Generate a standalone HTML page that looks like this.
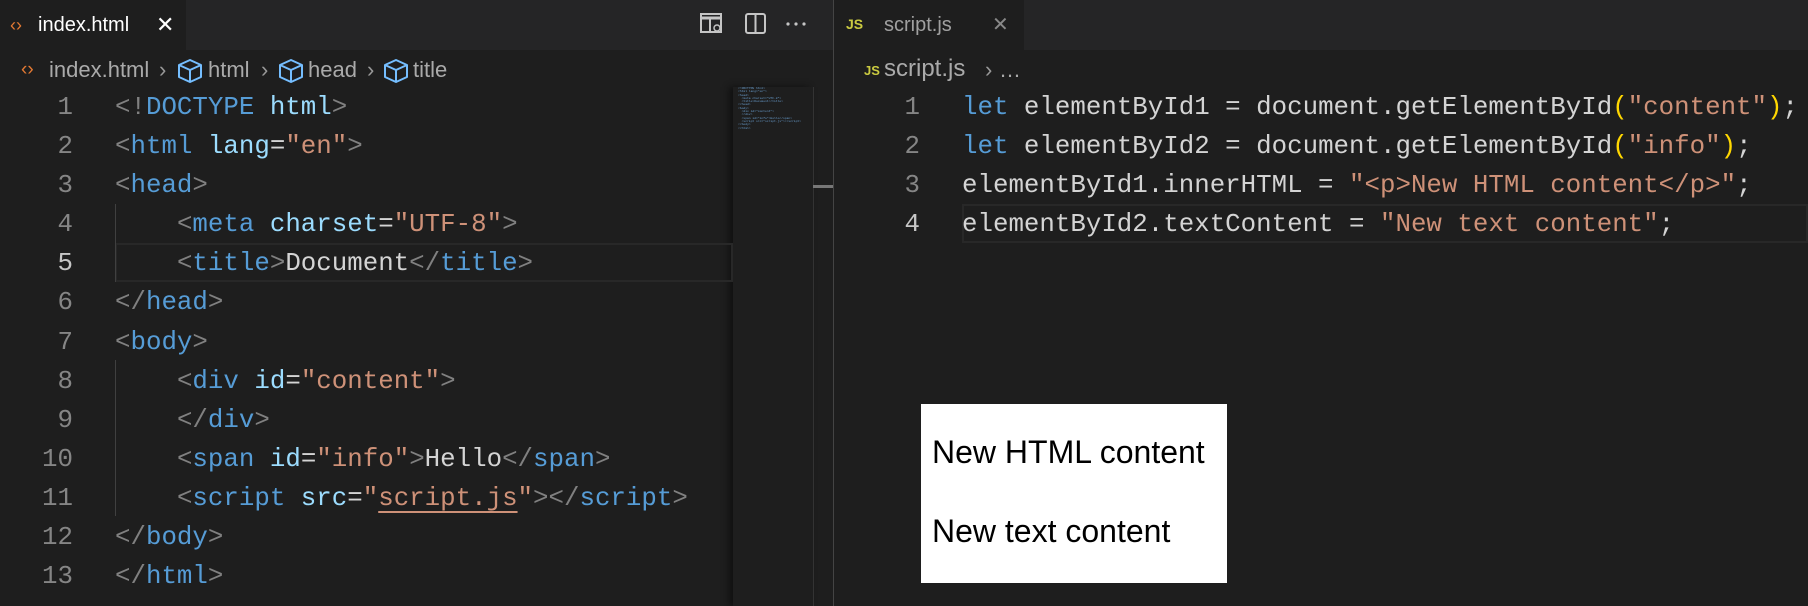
<!DOCTYPE html>
<html><head><style>
*{margin:0;padding:0;box-sizing:border-box}
body{width:1808px;height:606px;background:#1e1e1e;position:relative;overflow:hidden;font-family:"Liberation Sans",sans-serif}
.abs{position:absolute}
.tabbar{top:0;height:50px;background:#252526}
.tab{top:0;height:50px;background:#1e1e1e;color:#fff;font-size:20px;line-height:50px}
.code{font-family:"Liberation Mono",monospace;font-size:25.8px;color:#d4d4d4;white-space:pre}
.ln{font-family:"Liberation Mono",monospace;font-size:25.8px;color:#858585;text-align:right;width:40px;white-space:pre}
.t{color:#569cd6}.p{color:#808080}.a{color:#9cdcfe}.s{color:#ce9178}.y{color:#ffd700}
.cr{position:absolute;top:56px;line-height:28px;font-size:22px;color:#aaaaaa;white-space:nowrap}
</style></head><body>
<div class="abs tabbar" style="left:0;width:833px"></div>
<div class="abs tabbar" style="left:834px;width:974px"></div>
<div class="abs" style="left:833px;top:0;width:1px;height:606px;background:#444"></div>
<div class="abs tab" style="left:0;width:186px;padding-left:38px">index.html</div>
<div class="abs" style="left:156px;top:0;line-height:50px;color:#fff;font-size:22px">✕</div>
<div class="abs" style="left:10px;top:13px;color:#e37933;font-size:18px;line-height:24px">‹›</div>
<div class="abs tab" style="left:834px;width:190px;color:#a0a0a0;padding-left:50px">script.js</div>
<div class="abs" style="left:992px;top:0;line-height:50px;color:#888;font-size:20px">✕</div>
<div class="abs" style="left:846px;top:16px;color:#cbcb41;font-size:14px;font-weight:bold">JS</div>
<svg class="abs" style="left:700px;top:13px" width="110" height="22"><rect x="1" y="1" width="20" height="18" fill="none" stroke="#c5c5c5" stroke-width="2"/><line x1="1" y1="5" x2="21" y2="5" stroke="#c5c5c5" stroke-width="3"/><line x1="10" y1="5" x2="10" y2="19" stroke="#c5c5c5" stroke-width="2"/><circle cx="17" cy="15" r="3" fill="#252526" stroke="#c5c5c5" stroke-width="1.5"/><rect x="46" y="1" width="19" height="19" rx="2" fill="none" stroke="#c5c5c5" stroke-width="2"/><line x1="55.5" y1="1" x2="55.5" y2="20" stroke="#c5c5c5" stroke-width="2"/><circle cx="88" cy="11" r="1.6" fill="#c5c5c5"/><circle cx="96" cy="11" r="1.6" fill="#c5c5c5"/><circle cx="104" cy="11" r="1.6" fill="#c5c5c5"/></svg>
<!-- breadcrumbs -->
<div class="cr" style="left:21px;color:#e37933;font-size:19px">‹›</div>
<div class="cr" style="left:49px">index.html</div>
<div class="cr" style="left:159px;color:#999">›</div>
<div class="cr" style="left:208px">html</div>
<div class="cr" style="left:261px;color:#999">›</div>
<div class="cr" style="left:308px">head</div>
<div class="cr" style="left:367px;color:#999">›</div>
<div class="cr" style="left:413px">title</div>
<svg class="abs" style="left:0;top:58px" width="420" height="26">
<g fill="none" stroke="#75beff" stroke-width="2" stroke-linejoin="round">
<path d="M190 2 L201 7 L201 19 L190 24 L179 19 L179 7 Z M179 7 L190 12 L201 7 M190 12 L190 24"/>
<path d="M291 2 L302 7 L302 19 L291 24 L280 19 L280 7 Z M280 7 L291 12 L302 7 M291 12 L291 24"/>
<path d="M396 2 L407 7 L407 19 L396 24 L385 19 L385 7 Z M385 7 L396 12 L407 7 M396 12 L396 24"/>
</g></svg>
<div class="cr" style="left:864px;color:#cbcb41;font-size:13px;font-weight:bold;top:57px">JS</div>
<div class="cr" style="left:884px;font-size:24px;top:55px">script.js</div>
<div class="cr" style="left:985px;color:#999">›</div>
<div class="cr" style="left:999px">…</div>
<!-- minimap -->
<div class="abs" style="left:733px;top:87px;width:80px;height:519px;background:#1e1e1e;box-shadow:-4px 0 6px #111"></div>
<div class="abs" style="left:738px;top:87px;font-family:'Liberation Mono',monospace;font-size:3px;line-height:3.3px;color:#6a9fd0;white-space:pre">&lt;!DOCTYPE html&gt;
&lt;html lang="en"&gt;
&lt;head&gt;
  &lt;meta charset="UTF-8"&gt;
  &lt;title&gt;Document&lt;/title&gt;
&lt;/head&gt;
&lt;body&gt;
  &lt;div id="content"&gt;
  &lt;/div&gt;
  &lt;span id="info"&gt;Hello&lt;/span&gt;
  &lt;script src="script.js"&gt;&lt;/script&gt;
&lt;/body&gt;
&lt;/html&gt;</div>
<div class="abs" style="left:813px;top:87px;width:1px;height:519px;background:#333"></div>
<div class="abs" style="left:813px;top:185px;width:20px;height:3px;background:#777"></div>
<!-- current line -->
<div class="abs" style="left:115px;top:243px;width:618px;height:39px;border:2px solid #282828"></div>
<div class="abs" style="left:962px;top:204px;width:846px;height:39px;border:2px solid #282828"></div>
<div class="abs" style="left:115px;top:204px;width:1px;height:78px;background:#404040"></div>
<div class="abs" style="left:115px;top:360px;width:1px;height:156px;background:#404040"></div>
<div class="abs ln" style="left:33px;top:88px;line-height:39.1px">1
2
3
4
<span style="color:#c6c6c6">5</span>
6
7
8
9
10
11
12
13</div>
<div class="abs code" style="left:115px;top:88px;line-height:39.1px"><span class="p">&lt;!</span><span class="t">DOCTYPE</span> <span class="a">html</span><span class="p">&gt;</span>
<span class="p">&lt;</span><span class="t">html</span> <span class="a">lang</span>=<span class="s">"en"</span><span class="p">&gt;</span>
<span class="p">&lt;</span><span class="t">head</span><span class="p">&gt;</span>
    <span class="p">&lt;</span><span class="t">meta</span> <span class="a">charset</span>=<span class="s">"UTF-8"</span><span class="p">&gt;</span>
    <span class="p">&lt;</span><span class="t">title</span><span class="p">&gt;</span>Document<span class="p">&lt;/</span><span class="t">title</span><span class="p">&gt;</span>
<span class="p">&lt;/</span><span class="t">head</span><span class="p">&gt;</span>
<span class="p">&lt;</span><span class="t">body</span><span class="p">&gt;</span>
    <span class="p">&lt;</span><span class="t">div</span> <span class="a">id</span>=<span class="s">"content"</span><span class="p">&gt;</span>
    <span class="p">&lt;/</span><span class="t">div</span><span class="p">&gt;</span>
    <span class="p">&lt;</span><span class="t">span</span> <span class="a">id</span>=<span class="s">"info"</span><span class="p">&gt;</span>Hello<span class="p">&lt;/</span><span class="t">span</span><span class="p">&gt;</span>
    <span class="p">&lt;</span><span class="t">script</span> <span class="a">src</span>=<span class="s">"<span style="text-decoration:underline;text-underline-offset:6px">script.js</span>"</span><span class="p">&gt;&lt;/</span><span class="t">script</span><span class="p">&gt;</span>
<span class="p">&lt;/</span><span class="t">body</span><span class="p">&gt;</span>
<span class="p">&lt;/</span><span class="t">html</span><span class="p">&gt;</span></div>
<div class="abs ln" style="left:880px;top:88px;line-height:39.1px">1
2
3
<span style="color:#c6c6c6">4</span></div>
<div class="abs code" style="left:962px;top:88px;line-height:39.1px"><span class="t">let</span> elementById1 = document.getElementById<span class="y">(</span><span class="s">"content"</span><span class="y">)</span>;
<span class="t">let</span> elementById2 = document.getElementById<span class="y">(</span><span class="s">"info"</span><span class="y">)</span>;
elementById1.innerHTML = <span class="s">"&lt;p&gt;New HTML content&lt;/p&gt;"</span>;
elementById2.textContent = <span class="s">"New text content"</span>;</div>
<div class="abs" style="left:921px;top:404px;width:306px;height:179px;background:#fff;color:#000;font-size:32px">
<div class="abs" style="left:11px;top:30px;white-space:nowrap">New HTML content</div>
<div class="abs" style="left:11px;top:109px;white-space:nowrap">New text content</div>
</div>
</body></html>
